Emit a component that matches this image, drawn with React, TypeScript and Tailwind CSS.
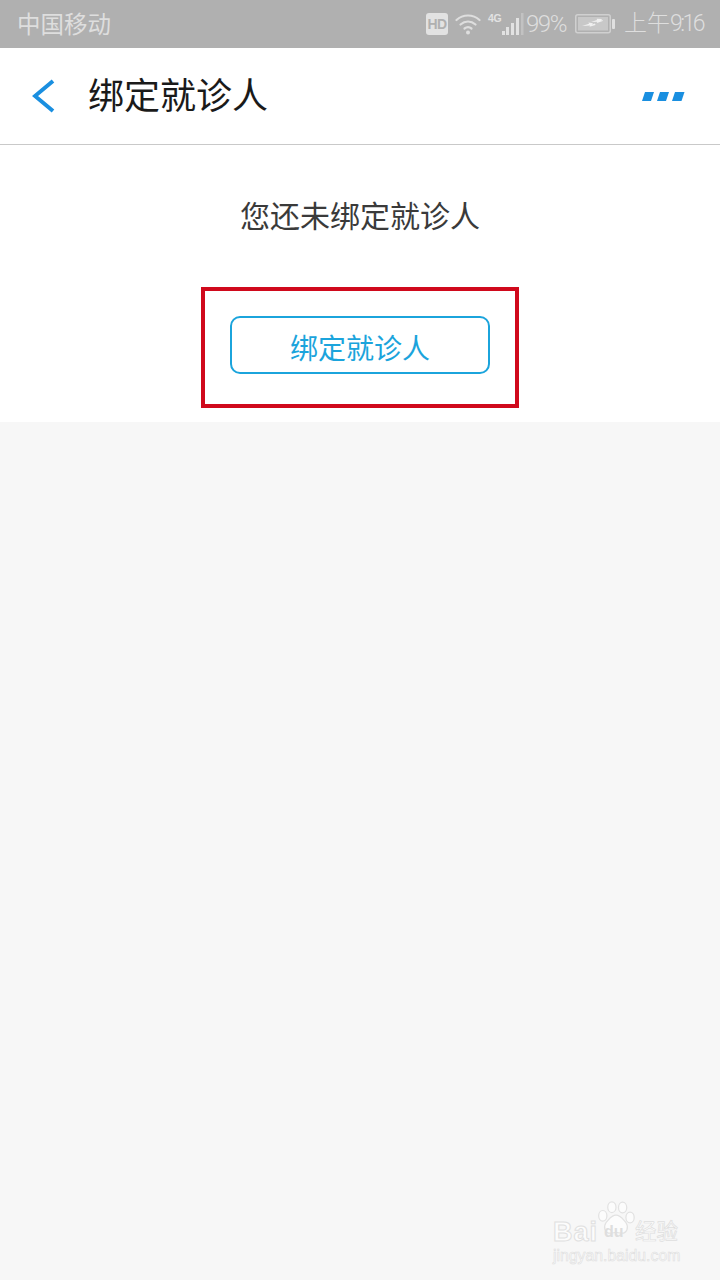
import React from "react";

const cjk = { fontFamily: '"Roboto","Noto Sans CJK SC",sans-serif' };
const latin = { fontFamily: '"Liberation Sans",sans-serif' };

function Wifi() {
  return (
    <svg width="26" height="22" viewBox="0 0 26 22" fill="none" stroke="#dedede" strokeWidth="2.2" strokeLinecap="round">
      <path d="M1.5 7C8 1 18 1 24.500 7" />
      <path d="M5.500 11.500C10 7.500 16 7.500 20.500 11.500" />
      <path d="M9.500 15.500C11.500 14 14.500 14 16.500 15.500" />
      <circle cx="13" cy="19.500" r="2" fill="#dedede" stroke="none" />
    </svg>
  );
}

function Signal() {
  return (
    <div className="relative w-[36px] h-[24px] ml-[7px]">
      <span className="absolute left-0 top-[0px] text-[10.500px] leading-[12px] font-bold text-[#e2e2e2] tracking-[-0.3px]" style={latin}>4G</span>
      <svg className="absolute left-0 top-0" width="36" height="24" viewBox="0 0 36 24" fill="#e2e2e2">
        <rect x="14" y="19" width="3" height="4" />
        <rect x="18" y="15" width="3" height="8" />
        <rect x="23" y="11" width="3" height="12" />
        <rect x="28" y="6" width="3" height="17" />
        <rect x="33" y="1" width="2.500" height="22" fill="#c2c2c2" />
      </svg>
    </div>
  );
}

function Battery() {
  return (
    <svg width="40" height="20" viewBox="0 0 40 20" fill="none">
      <rect x="0.750" y="0.750" width="34.500" height="18" rx="2" stroke="#d0d0d0" strokeWidth="1.500" />
      <rect x="3" y="3" width="30" height="13.500" fill="#c8c8c8" />
      <path d="M7 12l7-2.200-.5-1.300 4.500.8-1 1.200 3-1 .5 1.500-6 1.800.5-1.200z" fill="#f0f0f0" />
      <path d="M16 8l6-2-.3-1.200L27 5l-1 1.400 1.500-.4.300 1-6 2 .3-1.200z" fill="#f0f0f0" />
      <rect x="37" y="5" width="3" height="10" rx="1" fill="#e0e0e0" />
    </svg>
  );
}

function Watermark() {
  return (
    <div className="absolute left-[552px] top-[1200px] w-[132px] h-[66px]">
      <svg className="absolute left-[44px] top-[1px]" width="40" height="38" viewBox="0 0 48 46" fill="none">
        <ellipse cx="8" cy="18" rx="5" ry="6.500" fill="#fcfcfc" stroke="#e2e2e2" strokeWidth="1.500" />
        <ellipse cx="19" cy="7.500" rx="5" ry="6.500" fill="#fcfcfc" stroke="#e2e2e2" strokeWidth="1.500" />
        <ellipse cx="32" cy="8" rx="5" ry="6.500" fill="#fcfcfc" stroke="#e2e2e2" strokeWidth="1.500" />
        <ellipse cx="41" cy="20" rx="5" ry="6.500" fill="#fcfcfc" stroke="#e2e2e2" strokeWidth="1.500" />
        <path d="M24 17c6 0 8 5 12 9 4 6 1 13-5 13-3 0-5-1-7-1s-4 1-7 1c-6 0-9-7-5-13 4-4 6-9 12-9z" fill="#fcfcfc" stroke="#e2e2e2" strokeWidth="1.500" />
      </svg>
      <span className="absolute left-[1px] top-[17px] text-[27px] leading-[30px] font-bold tracking-[1px] text-[#fcfcfc] [-webkit-text-stroke:1px_#e0e0e0]" style={latin}>Bai</span>
      <span className="absolute left-[52px] top-[22px] text-[16px] leading-[20px] font-bold text-[#dedede]" style={latin}>du</span>
      <span className="absolute left-[83px] top-[19px] text-[21.500px] leading-[26px] text-[#fcfcfc] [-webkit-text-stroke:0.700px_#dedede] whitespace-nowrap" style={cjk}>经验</span>
      <span className="absolute left-[1px] top-[46px] text-[15.800px] leading-[20px] text-[#fcfcfc] [-webkit-text-stroke:0.600px_#dedede] whitespace-nowrap" style={latin}>jingyan.baidu.com</span>
    </div>
  );
}

export default function App() {
  return (
    <div className="relative w-[720px] h-[1280px] overflow-hidden bg-[#f7f7f7]" style={cjk}>
      <div className="h-[48px] bg-[#b0b0b0] flex items-center pl-[17px] pr-[17px] text-[#dedede]">
        <span className="text-[23.500px] leading-[32px] pt-[1px]">中国移动</span>
        <div className="ml-auto flex items-center">
          <div className="w-[22px] h-[22px] rounded-[3px] bg-[#e2e2e2] flex items-center justify-center text-[14px] font-bold tracking-[-0.5px] text-[#b0b0b0]" style={latin}>HD</div>
          <div className="ml-[7px]"><Wifi /></div>
          <Signal />
          <span className="ml-[2px] text-[24px] leading-[32px] tracking-[-1.500px] font-light">99%</span>
          <div className="ml-[9px]"><Battery /></div>
          <span className="ml-[9px] text-[23px] leading-[32px] font-light">上午<span className="tracking-[-2.500px]">9:16</span></span>
        </div>
      </div>

      <div className="h-[97px] bg-white border-b border-[#c9c9c9] flex items-center pl-[32px] pr-[34px]">
        <svg width="24" height="34" viewBox="0 0 24 34" fill="none" stroke="#1a8fe0" strokeWidth="4">
          <path d="M21 2L3 17L21 32" />
        </svg>
        <h1 className="ml-[32px] pt-[2px] text-[36px] leading-[48px] font-normal text-[#1a1a1a]">绑定就诊人</h1>
        <svg className="ml-auto" width="44" height="9" viewBox="0 0 44 9" fill="#1a8fe0">
          <path d="M3 0h9l-3 9H0z" />
          <path d="M18 0h9l-3 9h-9z" />
          <path d="M33 0h9.500l-3 9H30z" />
        </svg>
      </div>

      <div className="h-[277px] bg-white flex flex-col items-center">
        <p className="mt-[52px] text-[30px] leading-[40px] text-[#3a3a3a]">您还未绑定就诊人</p>
        <div className="mt-[50px] w-[318px] h-[121px] border-[4px] border-[#d0091c] flex justify-center pt-[25px]">
          <button className="w-[260px] h-[58px] rounded-[10px] border-2 border-[#1ba4dc] flex items-center justify-center pt-[10px] text-[28px] leading-[36px] text-[#1ba4dc]">绑定就诊人</button>
        </div>
      </div>

      <Watermark />
    </div>
  );
}
